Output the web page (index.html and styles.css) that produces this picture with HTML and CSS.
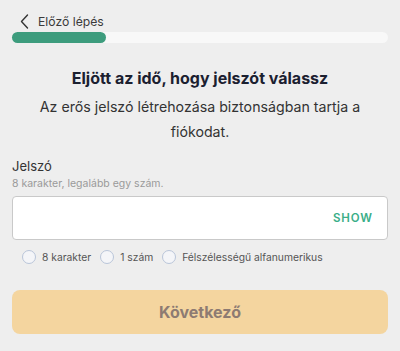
FILE: index.html
```html
<!DOCTYPE html>
<html lang="hu">
<head>
<meta charset="utf-8">
<link rel="stylesheet" href="styles.css">
</head>
<body>
<div class="page">
  <div class="back">
    <svg class="chev" width="9" height="15" viewBox="0 0 9 15"><path d="M7.5 1 L1.5 7.5 L7.5 14" fill="none" stroke="#333" stroke-width="1.4" stroke-linecap="round" stroke-linejoin="round"/></svg>
    <span>Előző lépés</span>
  </div>
  <div class="progress"><div class="fill"></div></div>
  <h1 class="title">Eljött az idő, hogy jelszót válassz</h1>
  <p class="sub">Az erős jelszó létrehozása biztonságban tartja a fiókodat.</p>
  <div class="label">Jelszó</div>
  <div class="hint">8 karakter, legalább egy szám.</div>
  <div class="input"><span class="show">SHOW</span></div>
  <div class="rules">
    <div class="rule"><span class="dot"></span>8 karakter</div>
    <div class="rule"><span class="dot"></span>1 szám</div>
    <div class="rule"><span class="dot"></span>Félszélességű alfanumerikus</div>
  </div>
  <button class="next">Következő</button>
</div>
</body>
</html>
```
FILE: styles.css
```css
* { box-sizing: border-box; }
html, body { margin: 0; padding: 0; background: #eeeeee; }
body { font-family: Inter, "Noto Sans", sans-serif; color: #222; }
.page { padding: 10px 12px 0 12px; }
.back { display: flex; align-items: center; height: 22px; padding-left: 8px; gap: 9px; font-size: 12.2px; color: #3a3a3a; }
.chev { display: block; }
.progress { margin-top: 0; height: 11px; border-radius: 6px; background: #f8f8f8; }
.fill { width: 94px; height: 100%; border-radius: 6px; background: #3d9c7d; }
.title { margin: 24px 0 0; text-align: center; font-size: 16px; font-weight: 700; color: #1b2030; line-height: 22px; }
.sub { margin: 5px 0 0; text-align: center; font-size: 14.2px; line-height: 25px; color: #333; padding: 0 8px; }
.label { margin-top: 14px; font-size: 13px; color: #333; line-height: 16px; }
.hint { margin-top: 3px; font-size: 10.5px; color: #9a9a9a; line-height: 14px; }
.input { margin-top: 5px; height: 44px; background: #fff; border: 1px solid #c9c9c9; border-radius: 4px; display: flex; align-items: center; justify-content: flex-end; padding-right: 14px; }
.show { font-size: 11.5px; font-weight: 600; letter-spacing: 0.9px; color: #3aae88; }
.rules { display: flex; gap: 9px; padding-left: 10px; margin-top: 10px; }
.rule { display: flex; align-items: center; gap: 6px; font-size: 10.3px; color: #555; line-height: 14px; }
.dot { width: 14px; height: 14px; border-radius: 50%; border: 1px solid #b9c5d9; background: #f4f5f8; }
.next { display: block; width: 100%; margin-top: 26px; height: 44px; border: none; border-radius: 8px; background: #f4d59f; color: #8d7b72; font-family: Inter, sans-serif; font-size: 16px; font-weight: 700; }
```
